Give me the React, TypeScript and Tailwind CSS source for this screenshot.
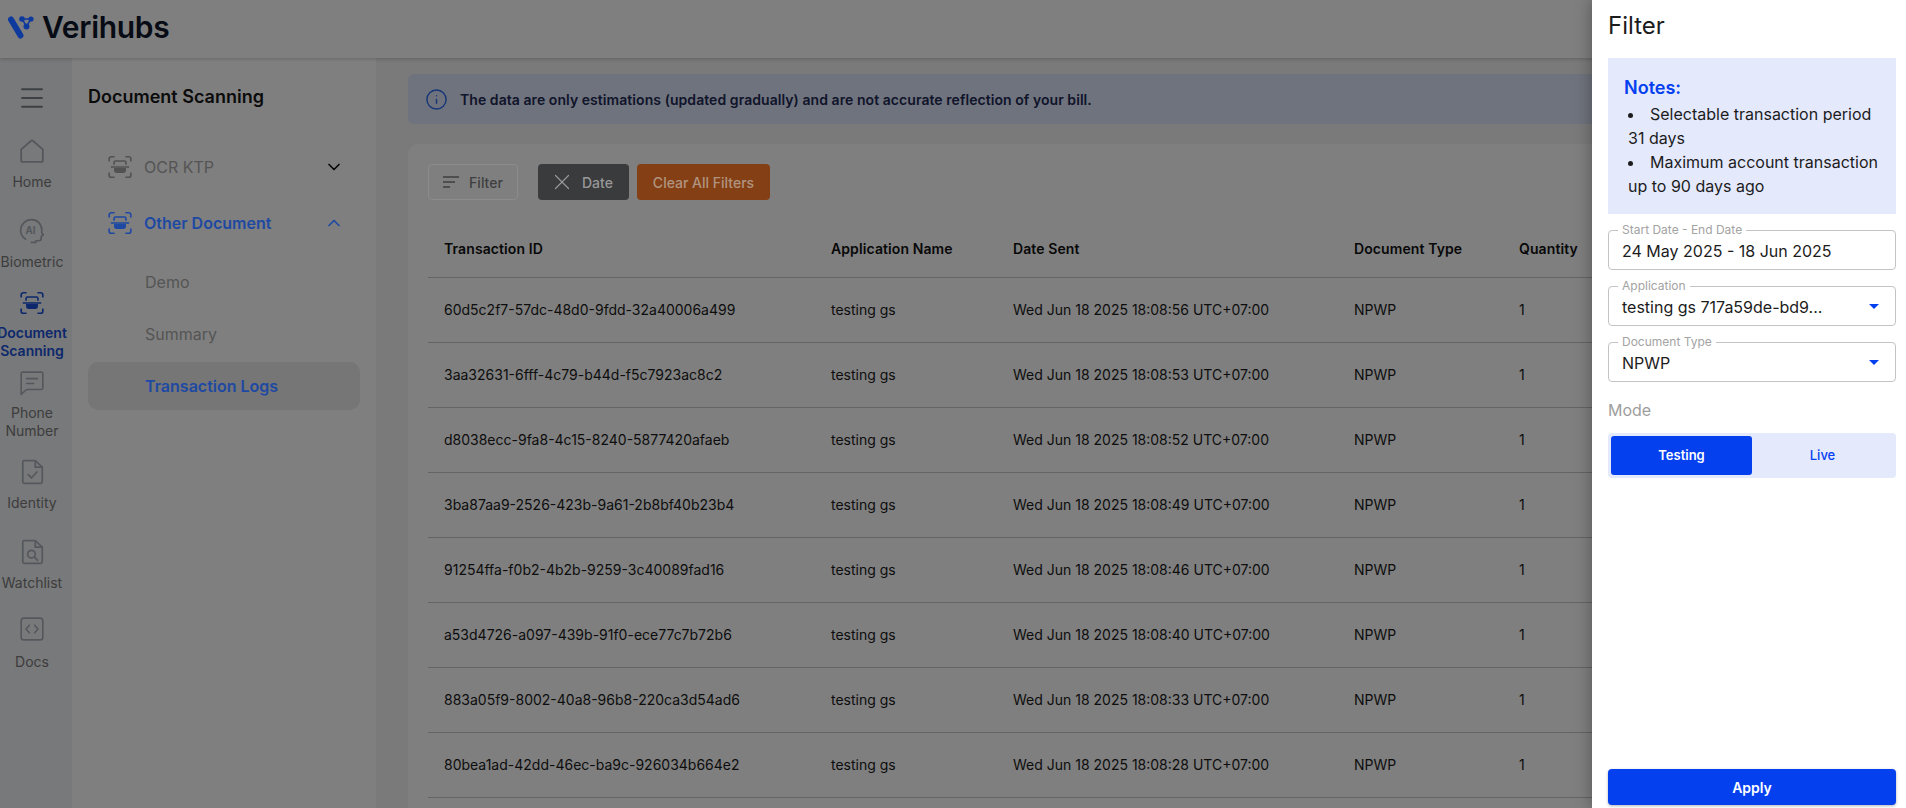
import React from 'react';
import { ChevronDown, ChevronUp, Info, Menu, X } from 'lucide-react';

const rows = [
  ['60d5c2f7-57dc-48d0-9fdd-32a40006a499', 'Wed Jun 18 2025 18:08:56 UTC+07:00'],
  ['3aa32631-6fff-4c79-b44d-f5c7923ac8c2', 'Wed Jun 18 2025 18:08:53 UTC+07:00'],
  ['d8038ecc-9fa8-4c15-8240-5877420afaeb', 'Wed Jun 18 2025 18:08:52 UTC+07:00'],
  ['3ba87aa9-2526-423b-9a61-2b8bf40b23b4', 'Wed Jun 18 2025 18:08:49 UTC+07:00'],
  ['91254ffa-f0b2-4b2b-9259-3c40089fad16', 'Wed Jun 18 2025 18:08:46 UTC+07:00'],
  ['a53d4726-a097-439b-91f0-ece77c7b72b6', 'Wed Jun 18 2025 18:08:40 UTC+07:00'],
  ['883a05f9-8002-40a8-96b8-220ca3d54ad6', 'Wed Jun 18 2025 18:08:33 UTC+07:00'],
  ['80bea1ad-42dd-46ec-ba9c-926034b664e2', 'Wed Jun 18 2025 18:08:28 UTC+07:00'],
];

const ScanIcon = ({ className }: { className: string }) => (
  <svg viewBox="0 0 24 24" className={className} fill="none" stroke="currentColor" strokeWidth="1.5">
    <path d="M2 7V4.500A2 2 0 0 1 4 2.500h3M17 2.500h3a2 2 0 0 1 2 2V7M2 17v2.500a2 2 0 0 0 2 2h3M17 21.500h3a2 2 0 0 0 2-2V17" />
    <path d="M6.500 10V8a1.500 1.500 0 0 1 1.500-1.500h8A1.500 1.500 0 0 1 17.500 8v2M3.500 12h17" />
    <path d="M6.500 13h11v2a2.500 2.500 0 0 1-2.500 2.500H9A2.500 2.500 0 0 1 6.500 15z" fill="currentColor" stroke="none" />
  </svg>
);

const HomeIcon = () => (
  <svg viewBox="0 0 24 24" className="w-[26px] h-[26px]" fill="none" stroke="currentColor" strokeWidth="1.7" strokeLinejoin="round">
    <path d="M2 10.500 11 2.800a1.500 1.500 0 0 1 2 0l9 7.700V20.500a1.500 1.500 0 0 1-1.500 1.500h-17A1.500 1.500 0 0 1 2 20.500z" />
  </svg>
);

const BiometricIcon = () => (
  <svg viewBox="0 0 24 24" className="w-[26px] h-[26px]" fill="none" stroke="currentColor" strokeWidth="1.600" strokeLinecap="round" strokeLinejoin="round">
    <path d="M6 19.500C3.200 17.500 1.500 15 1.500 11.500 1.500 6 6 1.500 11.500 1.500S21 5.500 21 11v3l1.500 1.500-2 1.500v2a2 2 0 0 1-2 2h-3v1.500h-4" />
    <text x="6" y="14.500" fontSize="9" fontWeight="700" fill="currentColor" stroke="none" fontFamily="Inter, sans-serif">AI</text>
  </svg>
);

const ChatIcon = () => (
  <svg viewBox="0 0 24 24" className="w-[26px] h-[26px]" fill="none" stroke="currentColor" strokeWidth="1.500" strokeLinejoin="round">
    <path d="M2 3.500A1.500 1.500 0 0 1 3.500 2h17A1.500 1.500 0 0 1 22 3.500v13a1.500 1.500 0 0 1-1.500 1.500H7l-5 4.500z" />
    <path d="M7 8h10M7 12.500h6.500" strokeLinecap="round" />
  </svg>
);

const IdentityIcon = () => (
  <svg viewBox="0 0 24 24" className="w-[26px] h-[26px]" fill="none" stroke="currentColor" strokeWidth="1.600" strokeLinejoin="round">
    <path d="M3.500 3A1.500 1.500 0 0 1 5 1.500H15L21.500 7.500V21a1.500 1.500 0 0 1-1.500 1.500H5A1.500 1.500 0 0 1 3.500 21z" />
    <path d="M15 1.500v6h6.500" />
    <path d="m8.500 14.500 3 3 5-5.500" strokeLinecap="round" />
  </svg>
);

const WatchlistIcon = () => (
  <svg viewBox="0 0 24 24" className="w-[26px] h-[26px]" fill="none" stroke="currentColor" strokeWidth="1.600" strokeLinejoin="round">
    <path d="M3.500 3A1.500 1.500 0 0 1 5 1.500H15L21.500 7.500V21a1.500 1.500 0 0 1-1.500 1.500H5A1.500 1.500 0 0 1 3.500 21z" />
    <path d="M15 1.500v6h6.500" />
    <circle cx="11.500" cy="14" r="3.500" />
    <path d="m14.200 16.700 3 3" strokeLinecap="round" />
  </svg>
);

const DocsIcon = () => (
  <svg viewBox="0 0 24 24" className="w-[26px] h-[26px]" fill="none" stroke="currentColor" strokeWidth="1.500" strokeLinecap="round" strokeLinejoin="round">
    <rect x="2" y="2" width="20" height="20" rx="2.500" />
    <path d="M9.500 8.500 6.500 12l3 3.500M14.500 8.500l3 3.500-3 3.500" />
  </svg>
);

const Logo = () => (
  <svg viewBox="0 0 26 23" className="relative z-[25] w-[26px] h-[23px]">
    <path d="M3 3.500 12.500 19.500" stroke="#0e3a9e" strokeWidth="6" strokeLinecap="round" />
    <path d="M14 3 23 3 18.500 10.500z" stroke="#0e3a9e" strokeWidth="1.500" fill="none" />
    <circle cx="14" cy="3" r="2.800" fill="#0e3a9e" />
    <circle cx="23" cy="3" r="2.600" fill="#0e3a9e" />
    <circle cx="18.500" cy="10.500" r="3" fill="#0e3a9e" />
  </svg>
);

const railItem = (
  icon: React.ReactNode,
  label: React.ReactNode,
  box: string,
  active?: boolean,
) => (
  <div className={`flex flex-col items-center ${box} ${active ? 'text-[#1a50d8]' : 'text-[#a8b0ba]'}`}>
    {icon}
    <span className={`text-[14px] leading-[18px] text-center whitespace-nowrap ${active ? 'font-semibold' : 'text-[#7a7a7a]'}`}>
      {label}
    </span>
  </div>
);

function Field({ label, children, arrow }: { label: string; children: React.ReactNode; arrow?: boolean }) {
  return (
    <div className="relative h-10 border border-[#c4c4c4] rounded-[4px] flex items-center justify-between pl-[13px] pr-[16px] text-[16px] text-[#1c1c1c]">
      <span className="absolute left-[9px] -top-[8px] bg-white px-[4px] text-[12px] leading-[14px] text-[#a3a3a3]">{label}</span>
      <span className="pt-[2px]">{children}</span>
      {arrow && <span className="w-0 h-0 border-x-[5px] border-x-transparent border-t-[5px] border-t-[#0540ef]" />}
    </div>
  );
}

export default function App() {
  return (
    <div className="relative h-[808px] w-full overflow-hidden bg-[#f4f4f4] font-['Inter',sans-serif]">
      <header className="relative h-[58px] bg-white shadow-[0_1px_4px_rgba(0,0,0,0.2)] flex items-center pl-2 gap-[8px] pb-[4px]">
        <Logo />
        <span className="text-[30px] font-semibold text-[#0f172a] tracking-[-0.3px]">Verihubs</span>
      </header>

      <div className="flex h-[750px]">
        <nav className="w-[72px] shrink-0 bg-[#f0f2f5] overflow-hidden flex flex-col items-center pt-[25px] pr-[8px]">
          <Menu className="w-[30px] h-[30px] text-[#7a8088] mb-[25px] shrink-0" strokeWidth={1.5} />
          {railItem(<HomeIcon />, 'Home', 'h-[80px] shrink-0 gap-[9px]')}
          {railItem(<BiometricIcon />, 'Biometric', 'h-[72px] shrink-0 gap-[9px]')}
          {railItem(<ScanIcon className="w-[26px] h-[26px]" />, <>Document<br />Scanning</>, 'h-[80px] shrink-0 gap-[8px]', true)}
          {railItem(<ChatIcon />, <>Phone<br />Number</>, 'h-[89px] shrink-0 gap-[8px]')}
          {railItem(<IdentityIcon />, 'Identity', 'h-[80px] shrink-0 gap-[9px]')}
          {railItem(<WatchlistIcon />, 'Watchlist', 'h-[77px] shrink-0 gap-[9px]')}
          {railItem(<DocsIcon />, 'Docs', 'h-[70px] shrink-0 gap-[11px]')}
        </nav>

        <aside className="w-[304px] shrink-0 bg-white pl-[16px] pr-[16px] pt-[27px]">
          <h2 className="text-[18px] font-semibold leading-[24px] text-[#161616]">Document Scanning</h2>
          <div className="mt-[30px] flex items-center h-[56px] pl-[19px] pr-[16px] text-[#aaaaaa] text-[16px]">
            <ScanIcon className="w-[26px] h-[26px] text-[#a4a4a4]" />
            <span className="ml-[11px] flex-1">OCR KTP</span>
            <ChevronDown className="w-5 h-5 text-[#111]" />
          </div>
          <div className="relative z-[25] flex items-center h-[56px] pl-[19px] pr-[16px] text-[#1e49a3] text-[16px] font-semibold">
            <ScanIcon className="w-[26px] h-[26px]" />
            <span className="ml-[11px] flex-1">Other Document</span>
            <ChevronUp className="w-5 h-5" />
          </div>
          <div className="mt-[5px] pl-[57px] text-[16px] text-[#aaaaaa] h-[52px] flex items-center">Demo</div>
          <div className="pl-[57px] text-[16px] text-[#aaaaaa] h-[52px] flex items-center">Summary</div>
          <div className="mt-[2px] pl-[57px] text-[16px] font-semibold h-[48px] flex items-center rounded-[10px] bg-[#ececec]">
            <span className="relative z-[25] text-[#1e49a3]">Transaction Logs</span>
          </div>
        </aside>

        <main className="flex-1 min-w-0 pl-[32px] pt-[16px]">
          <div className="h-[50px] rounded-[6px] bg-[#dfe7fb] flex items-center pl-[17px] gap-[12px] text-[14px] tracking-[0.06px] font-semibold text-[#1e2a55]">
            <Info className="w-[23px] h-[23px] text-[#2a6cf0]" strokeWidth={1.5} />
            The data are only estimations (updated gradually) and are not accurate reflection of your bill.
          </div>
          <section className="mt-[20px] bg-white rounded-t-[10px] h-[700px] pt-[20px] pl-[20px]">
            <div className="flex items-center h-[36px] text-[14px] font-medium">
              <button className="relative z-[25] h-full w-[90px] border border-[#8c8c8c] rounded-[4px] flex items-center justify-center gap-[10px] text-[#3f3f3f]">
                <svg viewBox="0 0 16 12" className="w-4 h-3" fill="none" stroke="currentColor" strokeWidth="1.300">
                  <path d="M0 1h16M0 6h12M0 11h7" />
                </svg>
                Filter
              </button>
              <button className="relative z-[25] ml-[20px] h-full w-[91px] rounded-[4px] bg-[#3a3b3d] flex items-center pl-[11px] gap-[7px] text-[#989898]">
                <X className="w-[26px] h-[26px]" strokeWidth={1.1} />
                Date
              </button>
              <button className="relative z-[25] ml-[8px] h-full w-[133px] rounded-[4px] bg-[#843f14] text-[#b09480]">Clear All Filters</button>
            </div>
            <div className="mt-[20px] text-[14px] text-[#1a1a1a]">
              <div className="grid grid-cols-[387px_182px_341px_165px_1fr] h-[58px] items-center pl-[16px] font-semibold tracking-[0.1px] text-[#111] border-b border-[#c8c8c8]">
                <span>Transaction ID</span>
                <span>Application Name</span>
                <span>Date Sent</span>
                <span>Document Type</span>
                <span>Quantity</span>
              </div>
              {rows.map(([id, date]) => (
                <div key={id} className="grid grid-cols-[387px_182px_341px_165px_1fr] h-[65px] items-center pl-[16px] pb-[1px] border-b border-[#c8c8c8]">
                  <span>{id}</span>
                  <span>testing gs</span>
                  <span>{date}</span>
                  <span>NPWP</span>
                  <span>1</span>
                </div>
              ))}
            </div>
          </section>
        </main>
      </div>

      <div className="absolute inset-0 z-20 bg-black/50" />

      <div className="absolute z-30 top-0 right-0 bottom-0 w-[314px] bg-white shadow-[0_0_16px_rgba(0,0,0,0.35)] pl-[16px] pr-[10px] flex flex-col">
        <h3 className="h-[58px] pt-[10px] text-[24px] leading-[32px] text-[#1c1c1c]">Filter</h3>
        <div className="h-[156px] bg-[#e4e9fc] pl-[16px] pr-[12px] pt-[17px] text-[16px] leading-[24px] text-[#1c1c1c]">
          <p className="text-[18px] font-semibold text-[#0540ef] leading-[26px]">Notes:</p>
          <ul className="mt-[1px] list-disc list-inside pl-[4px]">
            <li>Selectable transaction period 31 days</li>
            <li>Maximum account transaction up to 90 days ago</li>
          </ul>
        </div>
        <div className="mt-[16px] flex flex-col gap-[16px]">
          <Field label="Start Date - End Date">24 May 2025 - 18 Jun 2025</Field>
          <Field label="Application" arrow>testing gs 717a59de-bd9...</Field>
          <Field label="Document Type" arrow>NPWP</Field>
        </div>
        <p className="mt-[16px] text-[16px] leading-[24px] text-[#9e9e9e]">Mode</p>
        <div className="mt-[11px] h-[45px] rounded-[4px] bg-[#e4e9fc] flex items-center p-[3px] text-[13px]">
          <div className="w-[141px] h-[39px] rounded-[3px] bg-[#0540ef] text-white font-semibold flex items-center justify-center">Testing</div>
          <div className="flex-1 text-center text-[#0540ef] font-medium">Live</div>
        </div>
        <button className="mt-auto mb-[3px] h-[36px] rounded-[4px] bg-[#0540ef] text-white text-[14px] font-semibold shadow-[0_1px_3px_rgba(0,0,0,0.3)]">Apply</button>
      </div>
    </div>
  );
}
